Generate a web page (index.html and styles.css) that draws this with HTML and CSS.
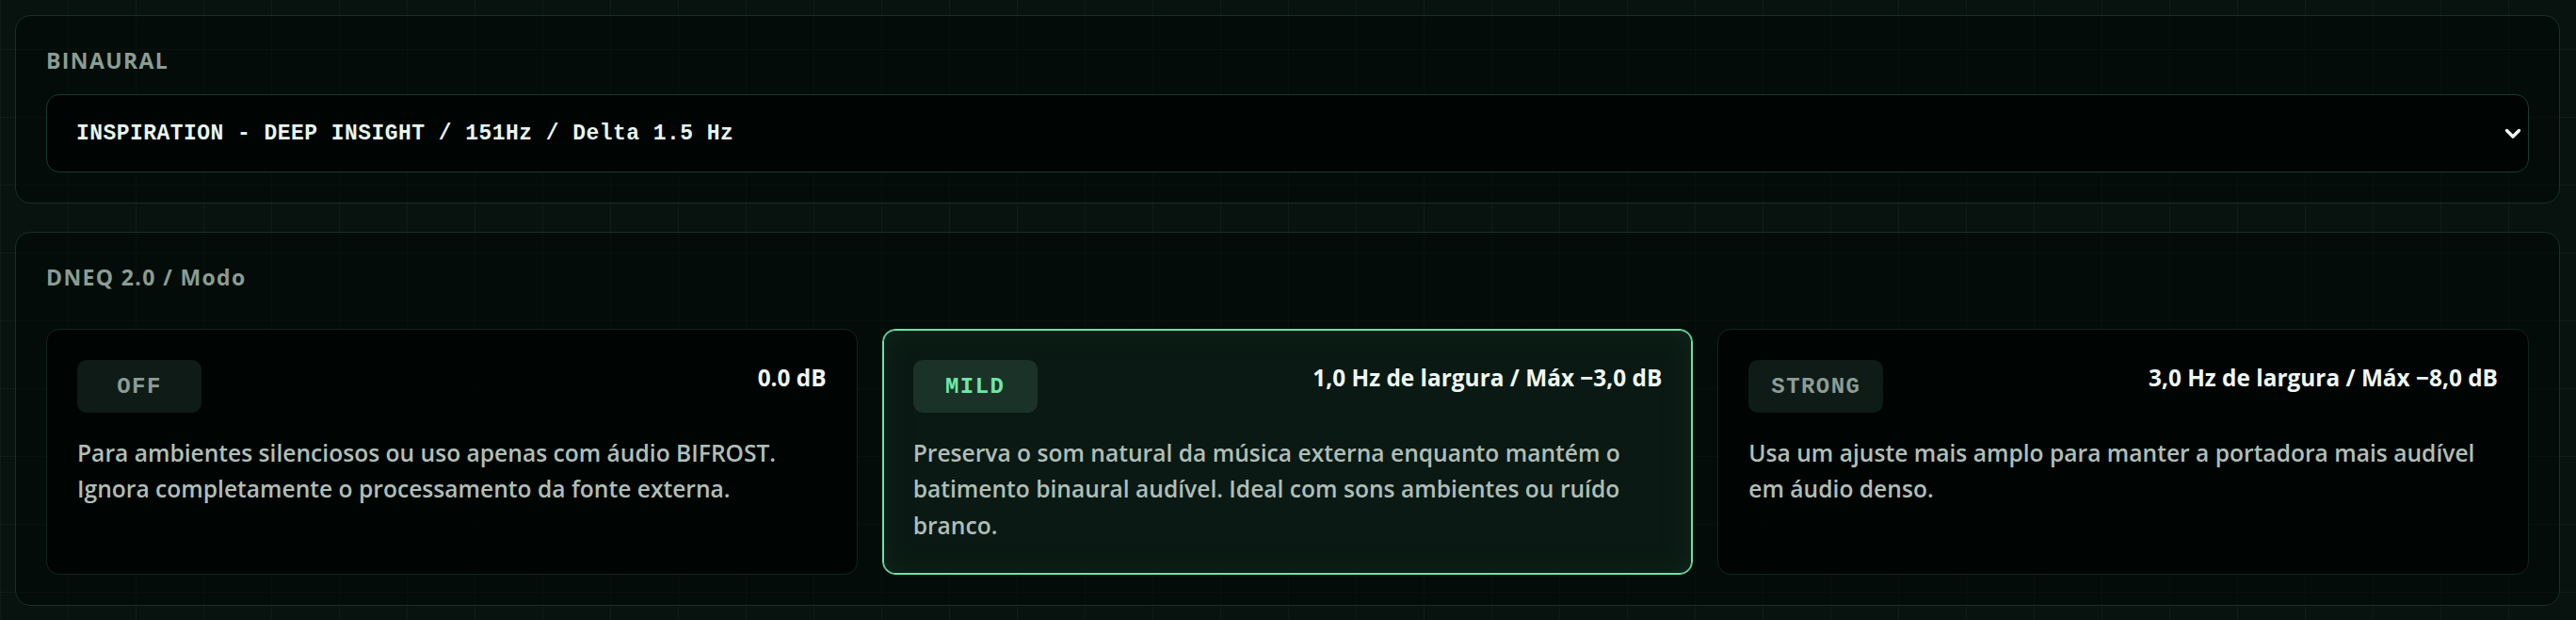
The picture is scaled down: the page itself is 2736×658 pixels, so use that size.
FILE: index.html
```html
<!DOCTYPE html>
<html lang="pt-BR">
<head>
<meta charset="utf-8">
<title>Binaural / DNEQ</title>
<link rel="stylesheet" href="styles.css">
</head>
<body>
<main class="page">
  <section class="panel panel-binaural">
    <h2 class="panel-label">BINAURAL</h2>
    <div class="select-wrap">
      <select class="preset-select">
        <option>INSPIRATION - DEEP INSIGHT / 151Hz / Delta 1.5 Hz</option>
      </select>
      <svg class="select-chevron" viewBox="0 0 18 12" aria-hidden="true">
        <path d="M2.5 2.5 L9 9 L15.5 2.5" fill="none" stroke="currentColor" stroke-width="3.4" stroke-linecap="round" stroke-linejoin="round"/>
      </svg>
    </div>
  </section>

  <section class="panel panel-dneq">
    <h2 class="panel-label">DNEQ 2.0 / Modo</h2>
    <div class="mode-grid">
      <article class="mode-card">
        <div class="mode-head">
          <span class="mode-badge">OFF</span>
          <span class="mode-meta">0.0 dB</span>
        </div>
        <p class="mode-desc">Para ambientes silenciosos ou uso apenas com áudio BIFROST. Ignora completamente o processamento da fonte externa.</p>
      </article>
      <article class="mode-card is-active">
        <div class="mode-head">
          <span class="mode-badge">MILD</span>
          <span class="mode-meta">1,0 Hz de largura / Máx −3,0 dB</span>
        </div>
        <p class="mode-desc">Preserva o som natural da música externa enquanto mantém o batimento binaural audível. Ideal com sons ambientes ou ruído branco.</p>
      </article>
      <article class="mode-card">
        <div class="mode-head">
          <span class="mode-badge">STRONG</span>
          <span class="mode-meta">3,0 Hz de largura / Máx −8,0 dB</span>
        </div>
        <p class="mode-desc">Usa um ajuste mais amplo para manter a portadora mais audível em áudio denso.</p>
      </article>
    </div>
  </section>
</main>
</body>
</html>
```

FILE: styles.css
```css
* {
  box-sizing: border-box;
}

html, body {
  margin: 0;
  padding: 0;
}

body {
  min-height: 100vh;
  background-color: #08120f;
  background-image:
    linear-gradient(to bottom, rgba(90, 170, 130, 0.07) 1px, transparent 1px),
    linear-gradient(to right, rgba(90, 170, 130, 0.07) 1px, transparent 1px);
  background-size: 72px 72px;
  background-position: 0 52px;
  font-family: "Open Sans", "Noto Sans", sans-serif;
  color: #e8f5ee;
}

.page {
  display: flex;
  flex-direction: column;
  gap: 30px;
  padding: 16px 17px 17px 16px;
}

.panel {
  border: 1px solid #173026;
  border-radius: 16px;
  background: rgba(2, 8, 6, 0.55);
  padding: 32px;
}

.panel-label {
  margin: 0;
  font-family: "Open Sans", "Noto Sans", sans-serif;
  font-weight: 700;
  font-size: 23px;
  line-height: 30px;
  letter-spacing: 0.06em;
  color: #8a9d93;
}

.panel-binaural .panel-label {
  margin-bottom: 21px;
}

.panel-dneq .panel-label {
  margin-bottom: 40px;
}

/* preset dropdown */
.select-wrap {
  position: relative;
}

.preset-select {
  display: block;
  width: 100%;
  height: 83px;
  appearance: none;
  -webkit-appearance: none;
  margin: 0;
  padding: 0 60px 0 31px;
  border: 1px solid #1b3a2c;
  border-radius: 14px;
  background: rgba(0, 3, 2, 0.9);
  color: #e8f5ee;
  font-family: "Liberation Mono", "DejaVu Sans Mono", monospace;
  font-weight: 700;
  font-size: 23px;
  letter-spacing: 0.45px;
  outline: none;
}

.select-chevron {
  position: absolute;
  right: 8px;
  top: 50%;
  width: 18px;
  height: 12px;
  margin-top: -6px;
  color: #eef7f2;
  pointer-events: none;
}

/* DNEQ mode cards */
.mode-grid {
  display: grid;
  grid-template-columns: repeat(3, 1fr);
  gap: 26px;
}

.mode-card {
  border: 1px solid #12241c;
  border-radius: 14px;
  background: rgba(0, 4, 3, 0.8);
  padding: 32px;
}

.mode-card.is-active {
  border-color: #6be3a6;
  box-shadow: inset 0 0 0 1px #6be3a6, inset 0 0 28px rgba(20, 50, 38, 0.55);
  background: rgba(11, 26, 20, 0.95);
}

.mode-head {
  display: flex;
  justify-content: space-between;
  align-items: flex-start;
  gap: 16px;
}

.mode-badge {
  display: inline-flex;
  align-items: center;
  justify-content: center;
  min-width: 132px;
  height: 56px;
  padding: 0 24px;
  border-radius: 10px;
  background: #0e1b16;
  color: #8d9c95;
  font-family: "Liberation Mono", "DejaVu Sans Mono", monospace;
  font-weight: 700;
  font-size: 24px;
  letter-spacing: 0.06em;
}

.is-active .mode-badge {
  background: #1a3228;
  color: #6ee7a8;
}

.mode-meta {
  font-weight: 700;
  font-size: 24.4px;
  line-height: 38.4px;
  color: #eef7f2;
  white-space: nowrap;
}

.mode-desc {
  margin: 24px 0 0;
  font-weight: 600;
  font-size: 24.6px;
  line-height: 38.4px;
  color: #b0beb7;
}
```
